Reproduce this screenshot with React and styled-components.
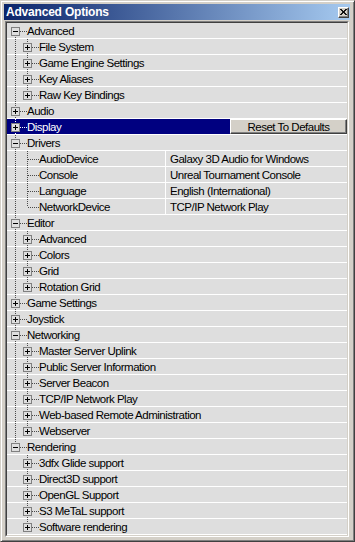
import styled, { createGlobalStyle } from 'styled-components';

const tree = [
	{ label: 'Advanced', open: true, children: ['File System', 'Game Engine Settings', 'Key Aliases', 'Raw Key Bindings'] },
	{ label: 'Audio' },
	{ label: 'Display', selected: true },
	{
		label: 'Drivers',
		open: true,
		leaves: [
			['AudioDevice', 'Galaxy 3D Audio for Windows'],
			['Console', 'Unreal Tournament Console'],
			['Language', 'English (International)'],
			['NetworkDevice', 'TCP/IP Network Play'],
		],
	},
	{ label: 'Editor', open: true, children: ['Advanced', 'Colors', 'Grid', 'Rotation Grid'] },
	{ label: 'Game Settings' },
	{ label: 'Joystick' },
	{
		label: 'Networking',
		open: true,
		children: [
			'Master Server Uplink',
			'Public Server Information',
			'Server Beacon',
			'TCP/IP Network Play',
			'Web-based Remote Administration',
			'Webserver',
		],
	},
	{
		label: 'Rendering',
		open: true,
		children: ['3dfx Glide support', 'Direct3D support', 'OpenGL Support', 'S3 MeTaL support', 'Software rendering'],
	},
];

function flatten(nodes) {
	const rows = [];
	nodes.forEach((node, i) => {
		const pos = i === 0 ? 'first' : i === nodes.length - 1 ? 'last' : 'mid';
		const isLeaf = !!node.leaves;
		const kids = node.children || node.leaves || [];
		rows.push({ level: 0, label: node.label, pos, expander: node.open ? '-' : '+', selected: node.selected });
		kids.forEach((k, j) => {
			rows.push({
				level: 1,
				label: isLeaf ? k[0] : k,
				value: isLeaf ? k[1] : undefined,
				trunk: pos !== 'last',
				pos: j === kids.length - 1 ? 'last' : 'mid',
				expander: isLeaf ? null : '+',
			});
		});
	});
	return rows;
}

const GlobalStyle = createGlobalStyle`
	html, body {
		margin: 0;
		padding: 0;
		background: #d4d0c8;
	}
`;

const Window = styled.div`
	width: 355px;
	height: 542px;
	box-sizing: border-box;
	padding: 3px 4px 4px 3px;
	background: #d4d0c8;
	border: 1px solid;
	border-color: #d4d0c8 #404040 #404040 #d4d0c8;
	box-shadow: inset 1px 1px #ffffff, inset -1px -1px #808080;
	font-family: 'Liberation Sans', Arial, sans-serif;
`;

const TitleBar = styled.div`
	height: 16px;
	margin-bottom: 1px;
	padding: 0 1px 0 2px;
	display: flex;
	align-items: center;
	justify-content: space-between;
	background: linear-gradient(90deg, #0a246a, #a6caf0);
`;

const Title = styled.span`
	color: #ffffff;
	font-weight: 700;
	font-size: 12px;
	letter-spacing: -0.2px;
`;

const CloseButton = styled.div`
	width: 11px;
	height: 11px;
	box-sizing: border-box;
	display: flex;
	align-items: center;
	justify-content: center;
	background: #d4d0c8;
	border: 1px solid;
	border-color: #ffffff #404040 #404040 #ffffff;
	box-shadow: inset -1px -1px #808080;
`;

const Sunken = styled.div`
	margin: 0 1px;
	border: 1px solid;
	border-color: #808080 #ffffff #ffffff #808080;
`;

const Tree = styled.div`
	border: 1px solid;
	border-color: #404040 #d4d0c8 #d4d0c8 #404040;
	background: #dedede;
`;

const Row = styled.div`
	display: flex;
	height: 16px;
	box-sizing: border-box;
	border-bottom: 1px solid #ffffff;
	background: #dedede;
	font-size: 11.5px;
	letter-spacing: -0.5px;
	color: #000000;
	white-space: nowrap;
`;

const Name = styled.div`
	display: flex;
	align-items: flex-start;
	overflow: hidden;
	${(p) => (p.$width ? `width: ${p.$width}px; flex-shrink: 0;` : 'flex: 1;')}
	background: ${(p) => (p.$selected ? '#000080' : 'transparent')};
	color: ${(p) => (p.$selected ? '#ffffff' : '#000000')};
`;

const Text = styled.span`
	padding-top: 2px;
	line-height: 13px;
`;

const Value = styled.div`
	flex: 1;
	border-left: 1px solid #ffffff;
	padding-left: 4px;
	display: flex;
	align-items: flex-start;
	overflow: hidden;
`;

const ResetButton = styled.div`
	flex: 1;
	box-sizing: border-box;
	height: 15px;
	border: 1px solid;
	border-color: #ffffff #404040 #404040 #ffffff;
	box-shadow: inset -1px -1px #808080;
	background: #d4d0c8;
	text-align: center;
	line-height: 12px;
	padding-top: 1px;
`;

function Guides({ row, selected }) {
	const dot = selected ? '#ffffff' : '#4a4a4a';
	const dash = '1 1';
	const width = row.level === 0 ? 20 : 32;
	const boxX = row.level === 0 ? 4.5 : 16.5;
	const lines = [];

	if (row.level === 0) {
		const y1 = row.pos === 'first' ? 8 : 0;
		const y2 = row.pos === 'last' ? 8 : 15;
		lines.push(<line key="v" x1="8.5" y1={y1} x2="8.5" y2={y2} />);
		lines.push(<line key="h" x1="13" y1="8.5" x2="20" y2="8.5" />);
	} else {
		if (row.trunk) lines.push(<line key="t" x1="8.5" y1="0" x2="8.5" y2="15" />);
		lines.push(<line key="v" x1="20.5" y1="0" x2="20.5" y2={row.pos === 'last' ? 8 : 15} />);
		lines.push(<line key="h" x1={row.expander ? 25 : 21} y1="8.5" x2="32" y2="8.5" />);
	}

	return (
		<svg width={width} height="15" style={{ flexShrink: 0, display: 'block' }}>
			<g stroke={dot} strokeDasharray={dash}>
				{lines}
			</g>
			{row.expander && (
				<g>
					<rect x={boxX} y="4.5" width="8" height="8" fill={selected ? '#dedede' : '#dedede'} stroke="#808080" />
					<line x1={boxX + 1.5} y1="8.5" x2={boxX + 6.5} y2="8.5" stroke="#000000" />
					{row.expander === '+' && (
						<line x1={boxX + 4} y1="6" x2={boxX + 4} y2="11" stroke="#000000" />
					)}
				</g>
			)}
		</svg>
	);
}

export default function App() {
	const rows = flatten(tree);

	return (
		<>
			<GlobalStyle />
			<Window>
				<TitleBar>
					<Title>Advanced Options</Title>
					<CloseButton>
						<svg width="7" height="6" viewBox="0 0 7 6">
							<path d="M0 0 L6 6 M1 0 L7 6 M6 0 L0 6 M7 0 L1 6" stroke="#000000" strokeWidth="0.9" />
						</svg>
					</CloseButton>
				</TitleBar>
				<Sunken>
					<Tree>
						{rows.map((row, i) => (
							<Row key={i}>
								<Name $selected={row.selected} $width={row.value ? 158 : row.selected ? 223 : null}>
									<Guides row={row} selected={row.selected} />
									<Text>{row.label}</Text>
								</Name>
								{row.value && (
									<Value>
										<Text>{row.value}</Text>
									</Value>
								)}
								{row.selected && <ResetButton>Reset To Defaults</ResetButton>}
							</Row>
						))}
					</Tree>
				</Sunken>
			</Window>
		</>
	);
}
